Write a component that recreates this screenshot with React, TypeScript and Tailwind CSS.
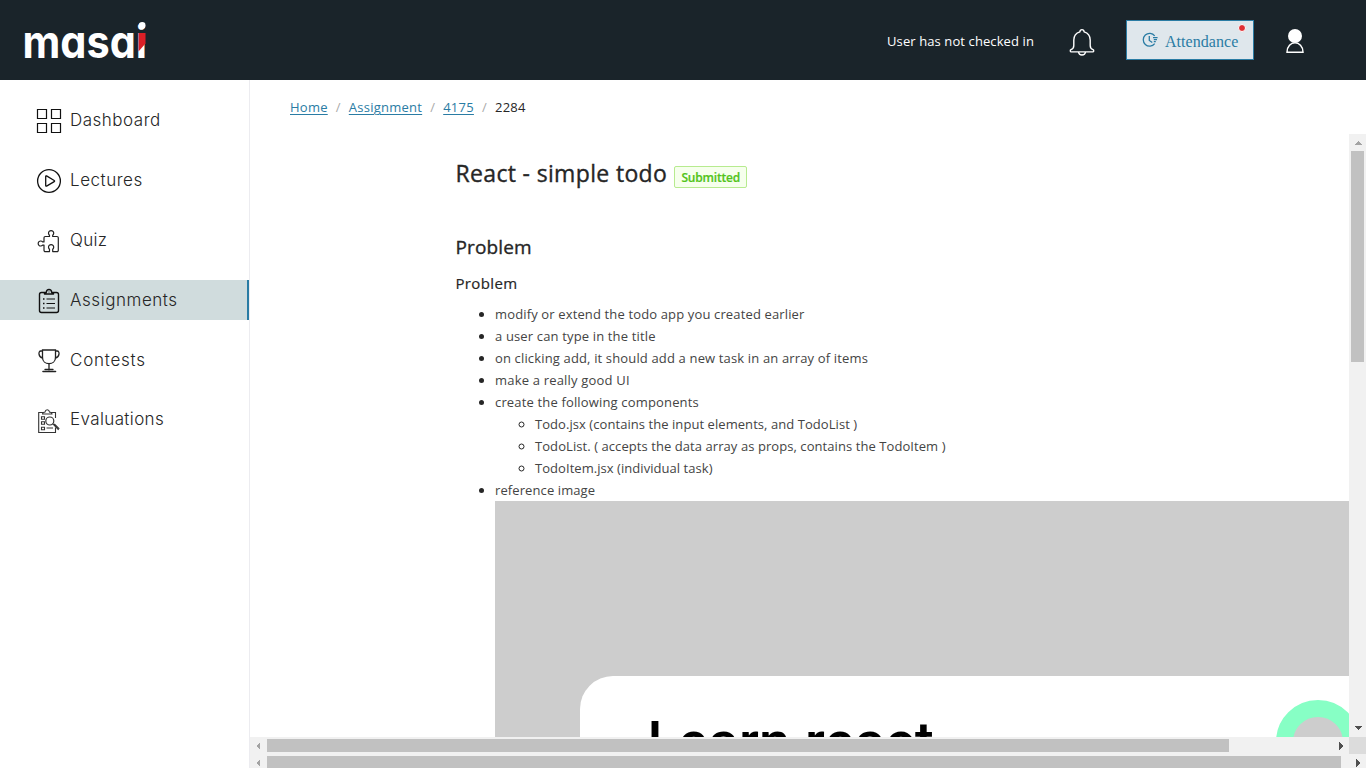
import React from 'react';

const icon = 'mt-[2px] h-[26px] w-[26px] shrink-0';

function DashboardIcon() {
  return (
    <svg className={icon} viewBox="0 0 26 26" fill="none" stroke="#111" strokeWidth="1.2">
      <path d="M1.5 1.5h9v9h-9zM15.5 1.5h9v9h-9zM1.5 15.5h9v9h-9zM15.5 15.5h9v9h-9z" />
    </svg>
  );
}

function PlayIcon() {
  return (
    <svg className={icon} viewBox="0 0 26 26" fill="none" stroke="#111" strokeWidth="1.3">
      <circle cx="13" cy="13" r="11.4" />
      <path d="M9.7 8.4v9.2c0 .5.5.7.9.5l7.6-4.5c.5-.3.5-.8 0-1.1l-7.6-4.6c-.4-.2-.9 0-.9.5z" />
    </svg>
  );
}

function PuzzleIcon() {
  return (
    <svg className={icon} viewBox="0 0 26 26" fill="none" stroke="#222" strokeWidth="1.2" strokeLinejoin="round">
      <path d="M9.300 8.500h4.200V7.200a2.600 2.600 0 1 1 3.200 0v1.300h4.300a1.300 1.300 0 0 1 1.300 1.300v12.500a1.300 1.300 0 0 1-1.300 1.300h-4.300v-2.400a2.600 2.600 0 1 0-3.200 0v2.400H9.300a1.300 1.300 0 0 1-1.300-1.300v-5.200H6.600a2.500 2.500 0 1 1 0-3.200H8V9.800a1.300 1.300 0 0 1 1.300-1.300z" />
    </svg>
  );
}

function ClipboardIcon() {
  return (
    <svg className={icon} viewBox="0 0 26 26" fill="none" stroke="#111" strokeWidth="1.4" strokeLinejoin="round">
      <path d="M8.500 4.500h-3a2 2 0 0 0-2 2v16a2 2 0 0 0 2 2h15a2 2 0 0 0 2-2v-16a2 2 0 0 0-2-2h-3M8.500 6V4.500h1.800c.2-4 5.200-4 5.400 0h1.800V6z" />
      <path d="M10.500 11h8.500M10.500 15.500h8.500M10.500 20h8.500" strokeWidth="1.1" />
      <path d="M7 11h1.500M7 15.500h1.500M7 20h1.500" strokeWidth="1.3" />
      <path d="M12.500 4h1" strokeWidth="1" />
    </svg>
  );
}

function TrophyIcon() {
  return (
    <svg className={icon} viewBox="0 0 26 26" fill="none" stroke="#222" strokeWidth="1.300" strokeLinecap="round">
      <path d="M6.500 2h13v7.500c0 8.200-13 8.200-13 0zM6.500 3H4.800C2 3 2.200 9 6.700 10.200M19.500 3h1.700c2.800 0 2.600 6-1.900 7.200" />
      <path d="M13 15.800V22M9 21.500h8" />
      <path d="M7 23.500h12.500" strokeWidth="1.600" />
    </svg>
  );
}

function EvaluateIcon() {
  return (
    <svg className={icon} viewBox="0 0 26 26" fill="none" stroke="#333" strokeWidth="1.100">
      <path d="M7 4.500H2.700v20h16.800v-5M19.500 10V4.500h-4.300M6.500 6c0-1.800 1.200-1.500 2.500-2 .5-3 4-3 4.500 0 1.300.5 2.500.2 2.500 2z" />
      <path d="M5.500 8.700h3v2.600h-3zM5.500 13.700h3v2.600h-3zM5.500 19.200h3v2.600h-3zM10.500 20h6.500" />
      <circle cx="13.800" cy="13" r="4" strokeWidth="1.200" />
      <path d="M16.800 15.900l5.800 5.900M18.300 15.900l5 5" strokeWidth="1.100" />
    </svg>
  );
}

function Logo() {
  return (
    <svg className="h-[56px] w-[132px]" viewBox="0 0 132 56">
      <text x="2.500" y="46.300" fill="#fff" fontFamily="Inter, sans-serif" fontWeight="700" fontSize="45" textLength="124.500" lengthAdjust="spacingAndGlyphs" style={{ fontFeatureSettings: '"cv11"' }}>masai</text>
      <circle cx="122.200" cy="13.400" r="3.300" fill="#fff" />
      <path d="M118.500 21h7v10.500l-7 8z" fill="#dc1f26" />
    </svg>
  );
}

const nav = [
  { label: 'Dashboard', Icon: DashboardIcon, cls: 'tracking-[0.5px]' },
  { label: 'Lectures', Icon: PlayIcon, cls: 'tracking-[0.53px]' },
  { label: 'Quiz', Icon: PuzzleIcon, cls: 'tracking-[0.3px]' },
  { label: 'Assignments', Icon: ClipboardIcon, cls: 'tracking-[0.55px]', active: true },
  { label: 'Contests', Icon: TrophyIcon, cls: 'tracking-[0.75px]' },
  { label: 'Evaluations', Icon: EvaluateIcon, cls: 'tracking-[0.38px] -translate-y-px' },
];

function Arrow({ d, color }: { d: string; color: string }) {
  return (
    <svg className="h-[17px] w-[17px] shrink-0" viewBox="0 0 17 17" shapeRendering="crispEdges">
      <path d={d} fill={color} />
    </svg>
  );
}
const LEFT = 'M10 5v8L6 9z';
const RIGHT = 'M7 5v8l4-4z';
const UP = 'M5 11h8L9 7z';
const DOWN = 'M5 6h8l-4 4z';

export default function App() {
  return (
    <div className="flex h-[768px] w-[1366px] flex-col overflow-hidden bg-white font-['Open_Sans',sans-serif] text-[#262626]">
      <header className="flex h-20 shrink-0 items-center bg-[#1a242a] pr-[61px] pl-[20px]">
        <Logo />
        <span className="mt-[2px] ml-auto text-[13px] leading-5 tracking-[0.1px] whitespace-nowrap text-white">User has not checked in</span>
        <svg className="mt-1 ml-[34px] h-[28px] w-[28px]" viewBox="0 0 28 28" fill="none" stroke="#fff" strokeWidth="1.400" strokeLinejoin="round">
          <path d="M14 1.600c-1.300 0-2 .8-2.100 2.200C8 5 5.800 8 5.800 12v5.500c0 2.500-1 3.500-2.800 4.200-1.200.6-.8 2.200.3 2.200h21.400c1.100 0 1.500-1.600.3-2.200-1.800-.7-2.800-1.700-2.800-4.200V12c0-4-2.200-7-6.100-8.200C16 2.400 15.300 1.600 14 1.600z" />
          <path d="M10.500 24c.5 4 6.500 4 7 0" />
        </svg>
        <button className="relative ml-[30px] flex h-10 w-32 items-center border border-[#2a7ca4] bg-[#dfe7ec] pl-[15px] text-[#2a7ca4]">
          <svg className="h-4 w-4" viewBox="0 0 16 16" fill="none" stroke="currentColor" strokeWidth="1.300">
            <path d="M12.700 3.800A6.400 6.400 0 1 0 12.700 11.700M7.300 4v4.500l3 2M11 5.600h4.600M11.800 7.700h3.200M11.800 9.700h2" />
          </svg>
          <span className="mt-[3px] ml-[7px] font-['Liberation_Serif',serif] text-[16px] tracking-[0.050px]">Attendance</span>
          <span className="absolute top-[3px] right-[7px] h-2 w-2 rounded-full border border-white bg-[#e02f34]" />
        </button>
        <svg className="mt-[2px] ml-[31px] h-[28px] w-[20px]" viewBox="0 0 20 28">
          <circle cx="10" cy="9" r="7" fill="#fff" />
          <path d="M2 25.200c0-12.500 16-12.500 16 0z" fill="#1a242a" stroke="#fff" strokeWidth="1.500" />
        </svg>
      </header>
      <div className="flex min-h-0 flex-1">
        <nav className="flex w-[250px] shrink-0 flex-col gap-5 border-r border-[#ececf0] pt-5">
          {nav.map(({ label, Icon, cls, active }) => (
            <a key={label} className={active ? 'flex h-10 items-center border-r-2 border-[#2a7ca4] bg-[#d0dcdd] pl-9' : 'flex h-10 items-center pl-9'}>
              <Icon />
              <span className={`ml-2 font-[Inter,sans-serif] text-[17px] leading-6 font-light text-[#262626] ${cls}`}>{label}</span>
            </a>
          ))}
        </nav>
        <main className="flex min-w-0 flex-1 flex-col">
          <div className="flex h-[54px] shrink-0 items-center pt-[2px] pl-10 text-[13px] tracking-[0.25px] text-[#2a7ca4]">
            <a className="underline underline-offset-2">Home</a>
            <span className="mx-2 text-[#aaa]">/</span>
            <a className="underline underline-offset-2">Assignment</a>
            <span className="mx-2 text-[#aaa]">/</span>
            <a className="underline underline-offset-2">4175</a>
            <span className="mx-2 text-[#aaa]">/</span>
            <span className="text-[#262626]">2284</span>
          </div>
          <div className="flex h-[603px] shrink-0">
            <section className="min-w-0 flex-1 overflow-hidden pl-[205px]">
              <div className="flex h-20 items-center pl-[0.5px]">
                <h1 className="-mt-[2px] text-[23px] tracking-[0.340px] whitespace-nowrap [-webkit-text-stroke:0.35px]">React - simple todo</h1>
                <span className="mt-[6px] ml-[7px] flex h-[22px] w-[73px] items-center justify-center rounded-xs border border-[#b7eb8f] bg-[#f6ffed] pt-px text-[12px] font-semibold tracking-[-0.200px] text-[#52c41a] [-webkit-text-stroke:0.2px]">Submitted</span>
              </div>
              <h2 className="mt-[18px] pl-[0.5px] text-[19px] leading-[30px] tracking-[0.150px] [-webkit-text-stroke:0.35px]">Problem</h2>
              <h3 className="mt-[9px] mb-[-1px] pl-[0.5px] text-[15px] leading-6 tracking-[0.350px] [-webkit-text-stroke:0.2px]">Problem</h3>
              <ul className="mt-[9px] list-disc pl-10 text-[13px] leading-[22px] whitespace-nowrap text-[#262626]">
                <li><span className="tracking-[0.14px] text-[#444]">modify or extend the todo app you created earlier</span></li>
                <li><span className="tracking-[0.15px] text-[#444]">a user can type in the title</span></li>
                <li><span className="tracking-[0.15px] text-[#444]">on clicking add, it should add a new task in an array of items</span></li>
                <li><span className="tracking-[0.19px] text-[#444]">make a really good UI</span></li>
                <li>
                  <span className="tracking-[0.16px] text-[#444]">create the following components</span>
                  <ul className="list-[circle] pl-10">
                    <li><span className="tracking-[0.06px] text-[#444]">Todo.jsx (contains the input elements, and TodoList )</span></li>
                    <li><span className="tracking-[0.07px] text-[#444]">TodoList. ( accepts the data array as props, contains the TodoItem )</span></li>
                    <li><span className="tracking-[0.05px] text-[#444]">TodoItem.jsx (individual task)</span></li>
                  </ul>
                </li>
                <li>
                  <span className="tracking-[0.1px] text-[#444]">reference image</span>
                  <div className="h-[400px] w-[1200px] bg-[#cdcdcd] pt-[175px] pl-[84.5px]">
                    <div className="flex h-[225px] items-start rounded-tl-[33px] bg-white pl-[68px]">
                      <p className="mt-[32px] w-[628.5px] font-[Roboto,sans-serif] text-[56px] leading-[68px] font-medium tracking-[0.35px] text-black">Learn react</p>
                      <div className="mt-6 h-[84px] w-[84px] shrink-0 rounded-full border-[17px] border-[#87ffc5] bg-[#cdcdcd]" />
                    </div>
                  </div>
                </li>
              </ul>
            </section>
            <div className="flex w-[17px] shrink-0 flex-col bg-[#f1f1f1]">
              <Arrow d={UP} color="#a3a3a3" />
              <div className="mx-[2px] h-[211px] bg-[#c1c1c1]" />
              <div className="mt-auto flex"><Arrow d={DOWN} color="#505050" /></div>
            </div>
          </div>
          <div className="flex h-[17px] shrink-0 items-center bg-[#f1f1f1]">
            <Arrow d={LEFT} color="#a3a3a3" />
            <div className="h-[13px] w-[962px] bg-[#c1c1c1]" />
            <div className="ml-auto flex"><Arrow d={RIGHT} color="#505050" /></div>
            <div className="h-[17px] w-[17px] bg-[#dcdcdc]" />
          </div>
          <div className="flex h-[17px] shrink-0 items-center bg-[#f1f1f1]">
            <Arrow d={LEFT} color="#a3a3a3" />
            <div className="h-[13px] w-[1074px] bg-[#c1c1c1]" />
            <div className="ml-auto flex"><Arrow d={RIGHT} color="#505050" /></div>
          </div>
        </main>
      </div>
    </div>
  );
}
